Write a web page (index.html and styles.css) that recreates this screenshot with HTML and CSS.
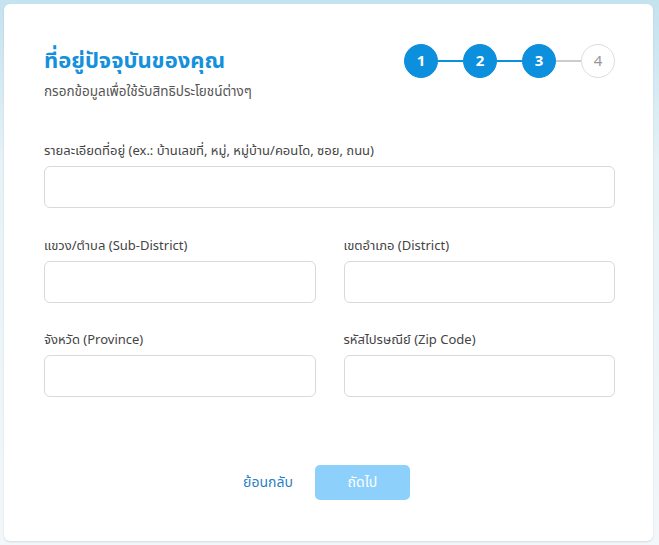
FILE: index.html
```html
<!DOCTYPE html>
<html lang="th">
<head>
    <meta charset="UTF-8">
    <title>ที่อยู่ปัจจุบันของคุณ</title>
    <link rel="stylesheet" href="styles.css">
</head>
<body>
    <div class="card">
        <div class="head">
            <div>
                <h1 class="title">ที่อยู่ปัจจุบันของคุณ</h1>
                <p class="sub">กรอกข้อมูลเพื่อใช้รับสิทธิประโยชน์ต่างๆ</p>
            </div>
            <div class="steps">
                <span class="step done">1</span>
                <span class="line done"></span>
                <span class="step done">2</span>
                <span class="line done"></span>
                <span class="step done">3</span>
                <span class="line"></span>
                <span class="step">4</span>
            </div>
        </div>

        <div class="field">
            <label>รายละเอียดที่อยู่ (ex.: บ้านเลขที่, หมู่, หมู่บ้าน/คอนโด, ซอย, ถนน)</label>
            <input type="text">
        </div>

        <div class="grid">
            <div class="field">
                <label>แขวง/ตำบล (Sub-District)</label>
                <input type="text">
            </div>
            <div class="field">
                <label>เขตอำเภอ (District)</label>
                <input type="text">
            </div>
            <div class="field">
                <label>จังหวัด (Province)</label>
                <input type="text">
            </div>
            <div class="field">
                <label>รหัสไปรษณีย์ (Zip Code)</label>
                <input type="text">
            </div>
        </div>

        <div class="actions">
            <a class="back" href="#">ย้อนกลับ</a>
            <button class="next" disabled>ถัดไป</button>
        </div>
    </div>
</body>
</html>
```

FILE: styles.css
```css
html, body {
    height: 100%;
}
body {
    margin: 0;
    padding: 4px 6px 4px 4px;
    box-sizing: border-box;
    font-family: "Noto Sans Thai", "Noto Sans", "Liberation Sans", sans-serif;
    background: linear-gradient(180deg, #c4e2ef 0%, #e6f2f7 30%, #f2f7f9 100%);
}
.card {
    background: #fff;
    border-radius: 6px;
    box-shadow: 0 1px 2px rgba(0, 0, 0, 0.12);
    padding: 40px 38px 40px 40px;
    height: 537px;
    box-sizing: border-box;
}
.head {
    display: flex;
    justify-content: space-between;
    align-items: flex-start;
    margin-bottom: 40px;
}
.title {
    margin: 3px 0 0;
    font-size: 22px;
    line-height: 30px;
    font-weight: 700;
    color: #1590dc;
}
.sub {
    margin: 5px 0 0;
    font-size: 13.5px;
    color: #555;
}
.steps {
    display: flex;
    align-items: center;
}
.step {
    width: 34px;
    height: 34px;
    border-radius: 50%;
    box-sizing: border-box;
    border: 1px solid #ddd;
    background: #fff;
    color: #999;
    font-size: 15px;
    display: flex;
    align-items: center;
    justify-content: center;
}
.step.done {
    background: #0c8fdc;
    border-color: #0c8fdc;
    color: #fff;
    font-weight: 700;
}
.line {
    width: 25px;
    height: 2px;
    background: #ccc;
}
.line.done {
    background: #0c8fdc;
}
.field label {
    display: block;
    font-size: 13px;
    line-height: 18px;
    color: #444;
    margin-bottom: 6px;
}
.field input {
    display: block;
    width: 100%;
    height: 42px;
    box-sizing: border-box;
    border: 1px solid #d9d9d9;
    border-radius: 6px;
}
.grid {
    display: grid;
    grid-template-columns: 1fr 1fr;
    column-gap: 28px;
    row-gap: 28px;
    margin-top: 29px;
}
.actions {
    display: flex;
    justify-content: center;
    align-items: center;
    gap: 22px;
    margin-top: 68px;
    padding-right: 6px;
}
.back {
    color: #2a7fc4;
    text-decoration: none;
    font-size: 14px;
}
.next {
    width: 95px;
    height: 35px;
    border: none;
    border-radius: 5px;
    background: #8dd0fb;
    color: #fff;
    font-family: inherit;
    font-size: 14px;
}
```
